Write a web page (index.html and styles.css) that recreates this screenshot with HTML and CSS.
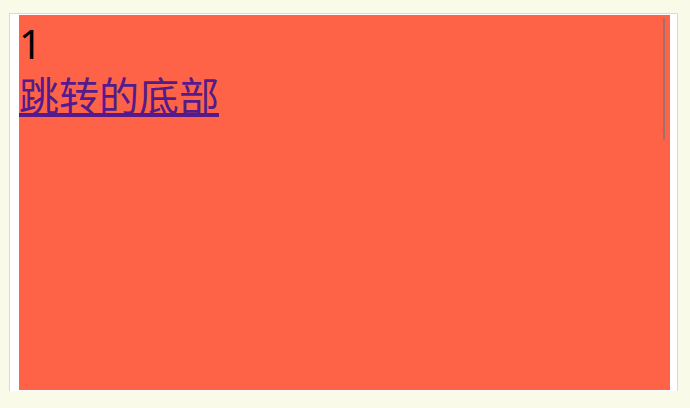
FILE: index.html
```html
<!DOCTYPE html>
<html lang="zh">
<head>
<meta charset="utf-8">
<link rel="stylesheet" href="styles.css">
<title>跳转</title>
</head>
<body>
<div class="frame">
  <div class="panel">
    <div class="num">1</div>
    <a class="jump" href="#bottom">跳转的底部</a>
    <div class="thumb"></div>
  </div>
</div>
</body>
</html>
```

FILE: styles.css
```css
html, body {
  margin: 0;
  padding: 0;
  height: 100%;
}
body {
  background: #fafae9;
  overflow: hidden;
  font-family: "Noto Sans", "Noto Sans CJK SC", sans-serif;
}
.frame {
  margin: 13px 0 0 9px;
  width: 651px;
  height: 376px;
  padding: 1px 7px 0 9px;
  background: #ffffff;
  border: 1px solid #d6d8e4;
  border-bottom: none;
}
.panel {
  position: relative;
  width: 651px;
  height: 375px;
  background: #ff6347;
  overflow: hidden;
  font-size: 40px;
  line-height: 54px;
}
.num {
  color: #000000;
  padding-top: 2px;
  height: 52px;
}
.jump {
  color: #551a8b;
  text-decoration: underline;
}
.thumb {
  position: absolute;
  top: 3px;
  right: 5px;
  width: 2px;
  height: 122px;
  background: rgba(120, 120, 120, 0.75);
  border-radius: 1px;
}
```
